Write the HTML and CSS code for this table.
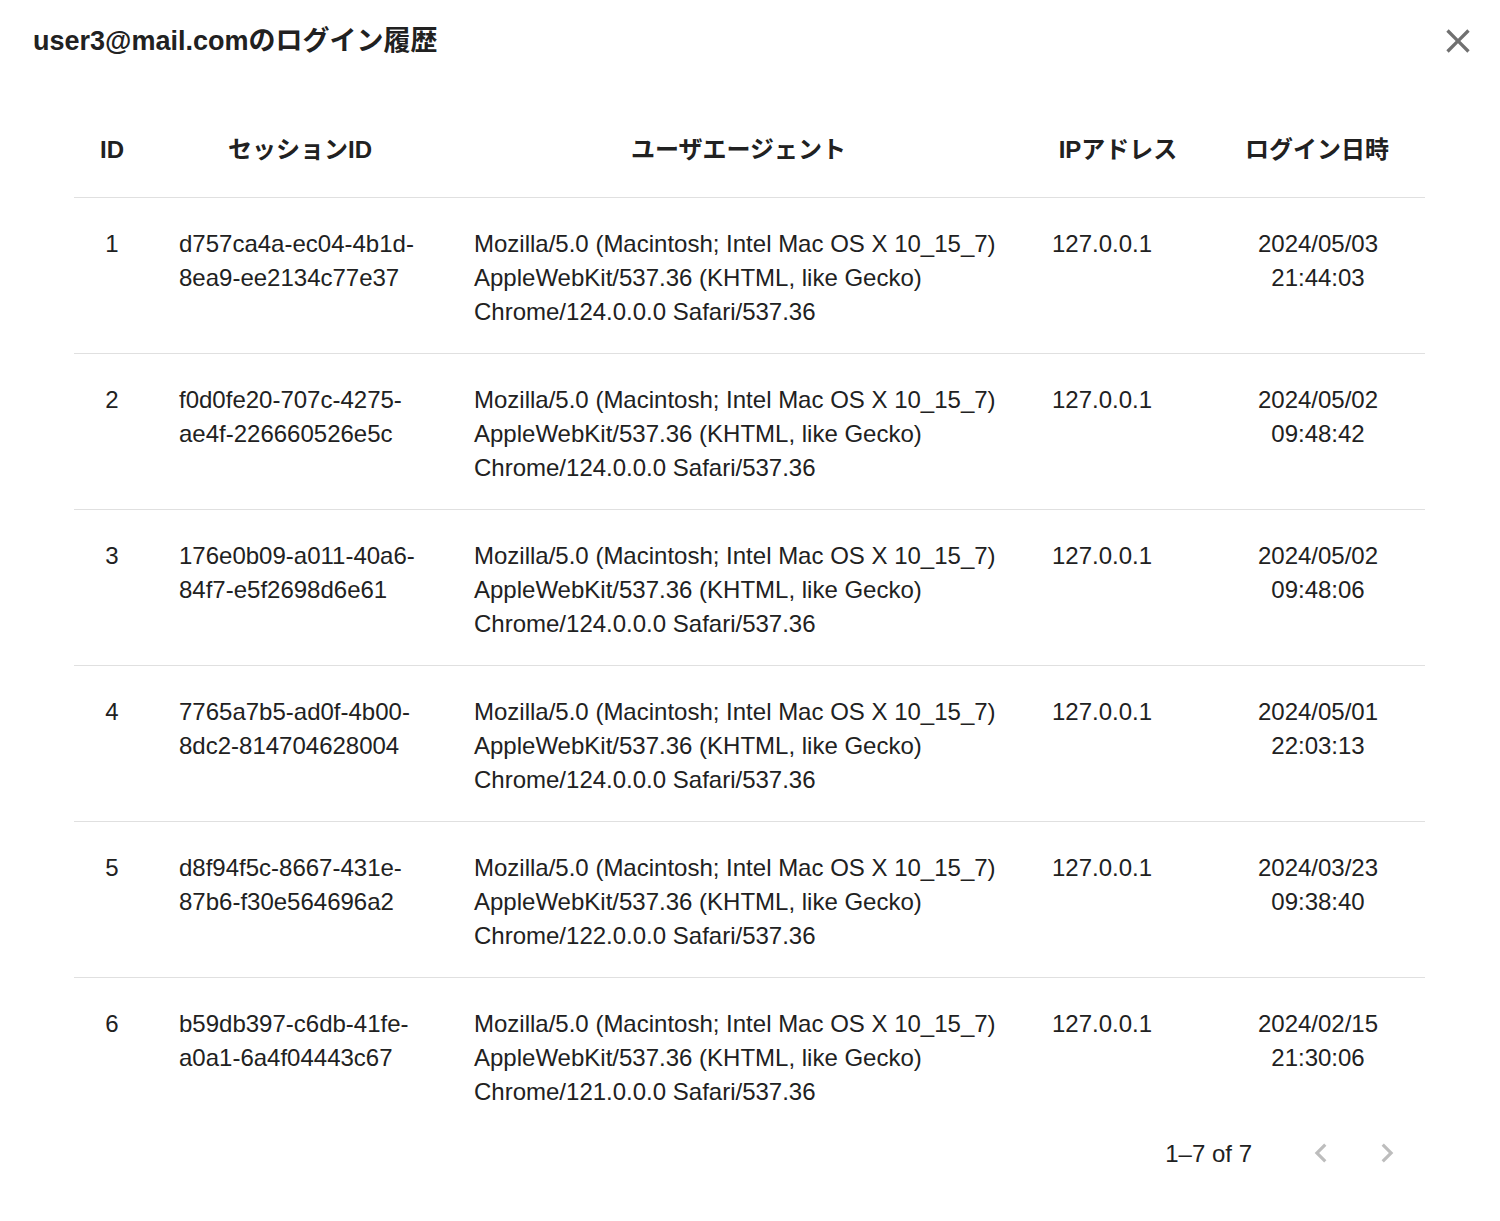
FILE: index.html
```html
<!DOCTYPE html>
<html lang="ja">
<head>
<meta charset="utf-8">
<title>ログイン履歴</title>
<link rel="stylesheet" href="styles.css">
</head>
<body>
<div class="dialog">
  <div class="dialog-header">
    <h2 class="dialog-title">user3@mail.comのログイン履歴</h2>
    <button class="close-btn" aria-label="close">
      <svg viewBox="0 0 24 24" width="40" height="40"><path d="M19 6.41 17.59 5 12 10.59 6.41 5 5 6.41 10.59 12 5 17.59 6.41 19 12 13.41 17.59 19 19 17.59 13.41 12z"/></svg>
    </button>
  </div>
  <div class="table-wrap">
    <table class="history">
      <colgroup>
        <col class="w-id"><col class="w-session"><col class="w-ua"><col class="w-ip"><col class="w-date">
      </colgroup>
      <thead>
        <tr>
          <th class="c-id">ID</th>
          <th class="c-session">セッションID</th>
          <th class="c-ua">ユーザエージェント</th>
          <th class="c-ip">IPアドレス</th>
          <th class="c-date">ログイン日時</th>
        </tr>
      </thead>
      <tbody>
        <tr>
          <td class="c-id">1</td>
          <td class="c-session">d757ca4a-<wbr>ec04-<wbr>4b1d-<wbr>8ea9-<wbr>ee2134c77e37</td>
          <td class="c-ua">Mozilla/5.0 (Macintosh; Intel Mac OS X 10_15_7) AppleWebKit/537.36 (KHTML, like Gecko) Chrome/124.0.0.0 Safari/537.36</td>
          <td class="c-ip">127.0.0.1</td>
          <td class="c-date">2024/05/03 21:44:03</td>
        </tr>
        <tr>
          <td class="c-id">2</td>
          <td class="c-session">f0d0fe20-<wbr>707c-<wbr>4275-<wbr>ae4f-<wbr>226660526e5c</td>
          <td class="c-ua">Mozilla/5.0 (Macintosh; Intel Mac OS X 10_15_7) AppleWebKit/537.36 (KHTML, like Gecko) Chrome/124.0.0.0 Safari/537.36</td>
          <td class="c-ip">127.0.0.1</td>
          <td class="c-date">2024/05/02 09:48:42</td>
        </tr>
        <tr>
          <td class="c-id">3</td>
          <td class="c-session">176e0b09-<wbr>a011-<wbr>40a6-<wbr>84f7-<wbr>e5f2698d6e61</td>
          <td class="c-ua">Mozilla/5.0 (Macintosh; Intel Mac OS X 10_15_7) AppleWebKit/537.36 (KHTML, like Gecko) Chrome/124.0.0.0 Safari/537.36</td>
          <td class="c-ip">127.0.0.1</td>
          <td class="c-date">2024/05/02 09:48:06</td>
        </tr>
        <tr>
          <td class="c-id">4</td>
          <td class="c-session">7765a7b5-<wbr>ad0f-<wbr>4b00-<wbr>8dc2-<wbr>814704628004</td>
          <td class="c-ua">Mozilla/5.0 (Macintosh; Intel Mac OS X 10_15_7) AppleWebKit/537.36 (KHTML, like Gecko) Chrome/124.0.0.0 Safari/537.36</td>
          <td class="c-ip">127.0.0.1</td>
          <td class="c-date">2024/05/01 22:03:13</td>
        </tr>
        <tr>
          <td class="c-id">5</td>
          <td class="c-session">d8f94f5c-<wbr>8667-<wbr>431e-<wbr>87b6-<wbr>f30e564696a2</td>
          <td class="c-ua">Mozilla/5.0 (Macintosh; Intel Mac OS X 10_15_7) AppleWebKit/537.36 (KHTML, like Gecko) Chrome/122.0.0.0 Safari/537.36</td>
          <td class="c-ip">127.0.0.1</td>
          <td class="c-date">2024/03/23 09:38:40</td>
        </tr>
        <tr class="last">
          <td class="c-id">6</td>
          <td class="c-session">b59db397-<wbr>c6db-<wbr>41fe-<wbr>a0a1-<wbr>6a4f04443c67</td>
          <td class="c-ua">Mozilla/5.0 (Macintosh; Intel Mac OS X 10_15_7) AppleWebKit/537.36 (KHTML, like Gecko) Chrome/121.0.0.0 Safari/537.36</td>
          <td class="c-ip">127.0.0.1</td>
          <td class="c-date">2024/02/15 21:30:06</td>
        </tr>
      </tbody>
    </table>
    <div class="pagination">
      <span class="page-info">1–7 of 7</span>
      <button class="page-btn" disabled aria-label="previous page">
        <svg viewBox="0 0 24 24" width="38" height="38"><path d="M15.41 16.59 10.83 12l4.58-4.59L14 6l-6 6 6 6 1.41-1.41z"/></svg>
      </button>
      <button class="page-btn" disabled aria-label="next page">
        <svg viewBox="0 0 24 24" width="38" height="38"><path d="M8.59 16.59 13.17 12 8.59 7.41 10 6l6 6-6 6-1.41-1.41z"/></svg>
      </button>
    </div>
  </div>
</div>
</body>
</html>
```
FILE: styles.css
```css
html, body {
  margin: 0;
  padding: 0;
  background: #ffffff;
}
body {
  font-family: "Liberation Sans", "Noto Sans CJK JP", Arial, sans-serif;
  color: rgba(0, 0, 0, 0.87);
}
.dialog {
  width: 1500px;
  min-height: 1221px;
  box-sizing: border-box;
}
.dialog-header {
  display: flex;
  align-items: center;
  justify-content: space-between;
  padding: 24px 22px 0 33px;
  height: 34px;
}
.dialog-title {
  margin: 0;
  font-size: 27px;
  line-height: 34px;
  font-weight: 700;
  color: #212121;
}
.close-btn {
  border: 0;
  background: none;
  padding: 0;
  width: 40px;
  height: 40px;
  display: flex;
  align-items: center;
  justify-content: center;
  cursor: pointer;
}
.close-btn svg {
  fill: rgba(0, 0, 0, 0.56);
  display: block;
}
.table-wrap {
  margin: 49px 75px 0 74px;
}
.history {
  width: 1351px;
  table-layout: fixed;
  border-collapse: collapse;
  font-size: 24px;
  line-height: 34px;
}
.w-id { width: 76px; }
.w-session { width: 300px; }
.w-ua { width: 577px; }
.w-ip { width: 182px; }
.w-date { width: 216px; }
.history th {
  font-weight: 700;
  padding: 26px 0 30px;
  text-align: center;
  border-bottom: 1px solid #e0e0e0;
  color: #212121;
}
.history td {
  padding: 29px 0 24px;
  vertical-align: top;
  border-bottom: 1px solid #e0e0e0;
  color: #212121;
}
.history tr.last td {
  border-bottom: 0;
  padding-bottom: 25px;
}
.history td.c-id { text-align: center; }
.history td.c-session { padding-left: 29px; padding-right: 25px; }
.history td.c-ua { padding-left: 24px; padding-right: 25px; }
.history td.c-ip { padding-left: 25px; padding-right: 20px; }
.history td.c-date { text-align: center; padding-left: 42px; padding-right: 40px; }
.pagination {
  display: flex;
  align-items: center;
  justify-content: flex-end;
  height: 38px;
  padding-right: 19px;
  gap: 28px;
}
.page-info {
  font-size: 24px;
  line-height: 34px;
  color: #212121;
  margin-right: 22px;
  position: relative;
  top: 1px;
}
.page-btn {
  border: 0;
  background: none;
  padding: 0;
  width: 38px;
  height: 38px;
  display: flex;
}
.page-btn svg {
  fill: rgba(0, 0, 0, 0.26);
  display: block;
}
```
